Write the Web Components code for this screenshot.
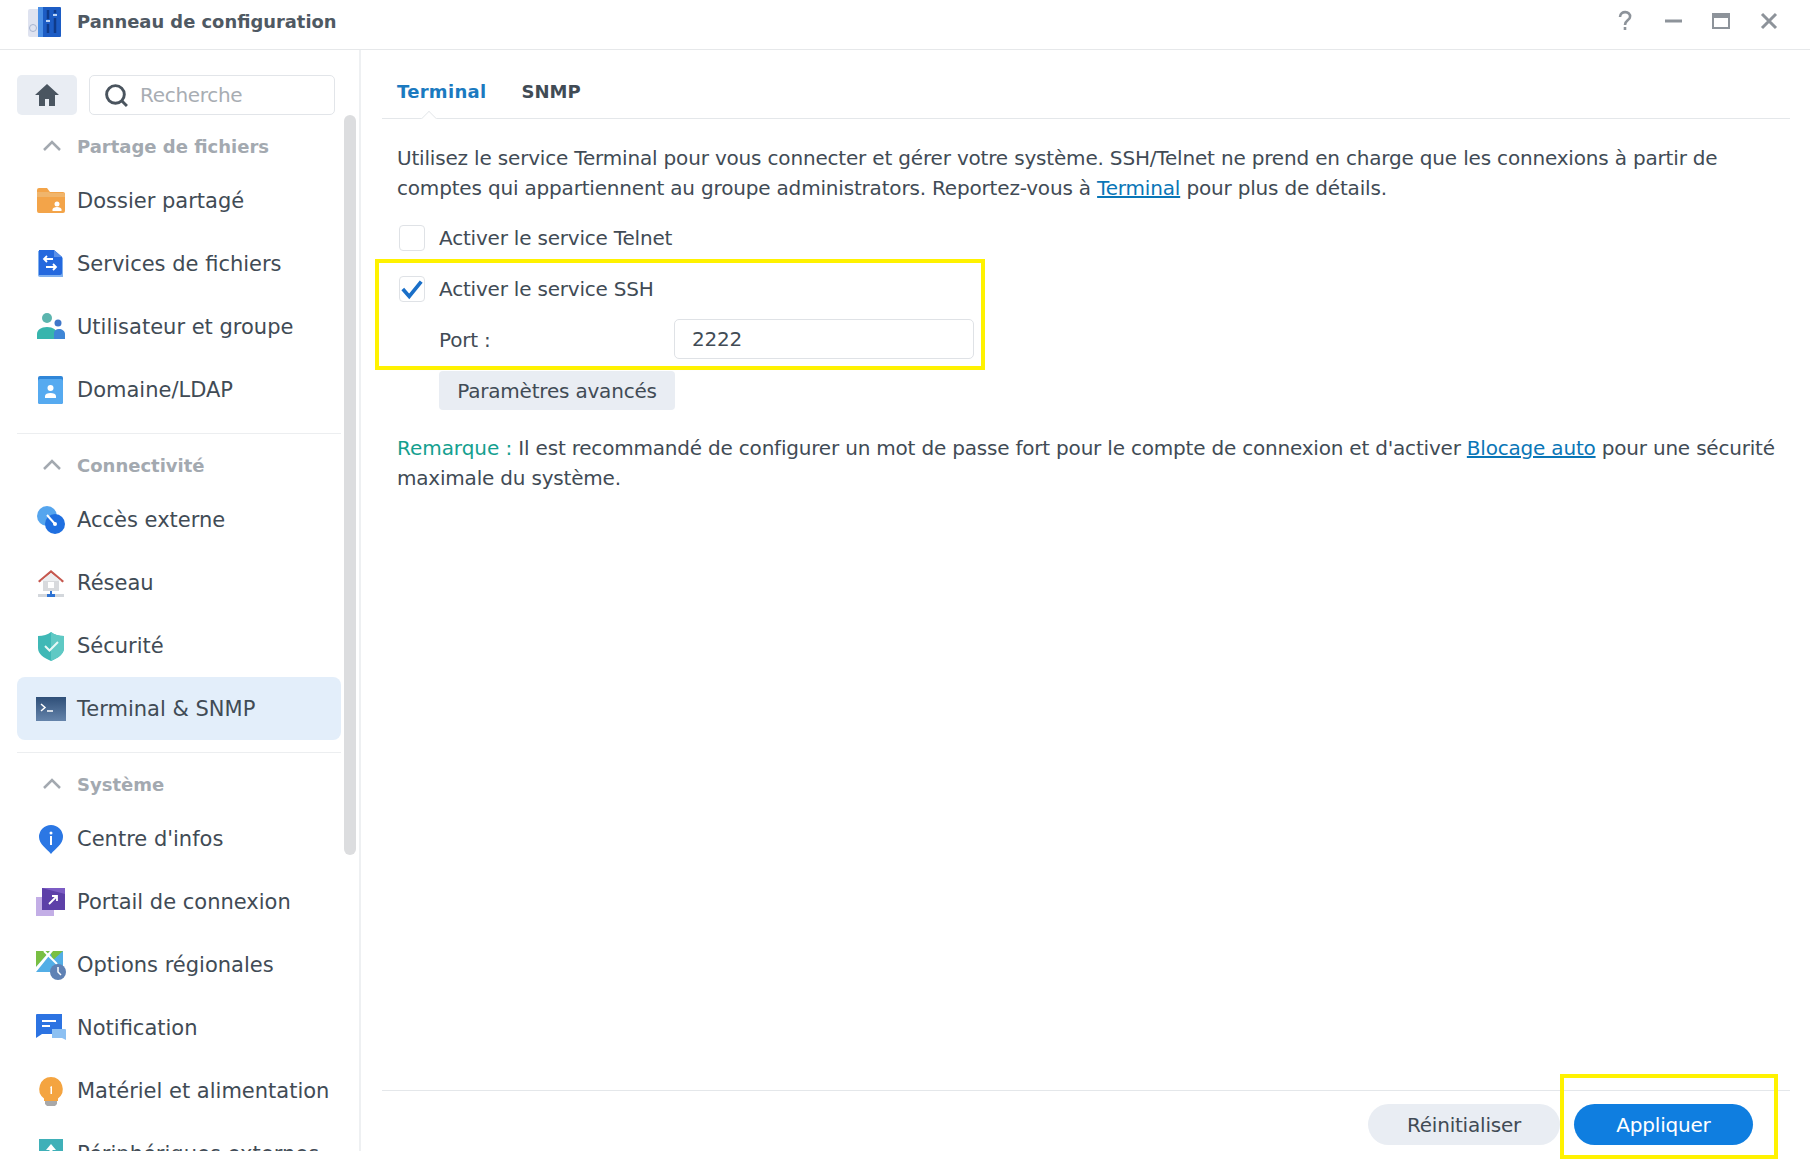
<!DOCTYPE html>
<html lang="fr">
<head>
<meta charset="utf-8">
<title>Panneau de configuration</title>
<style>
    html, body { margin: 0; height: 100%; background: #fff; overflow: hidden; }
    body { font-family: "DejaVu Sans", "Liberation Sans", sans-serif; color: #414b55; }
</style>
</head>
<body>
<dsm-window></dsm-window>
<script>
const ICONS = {
    folder: `<path d="M1 4a2 2 0 0 1 2-2h8l3 4h13a2 2 0 0 1 2 2v17a2 2 0 0 1-2 2H3a2 2 0 0 1-2-2z" fill="#f3a449"/><path d="M1 6h12l1 1h14l1 2v2H1z" fill="#f0b56c"/><circle cx="21" cy="18" r="2.5" fill="#fff"/><path d="M16.500 25v-1.500c0-1.500 2-2.500 4.500-2.500s4.500 1 4.500 2.500V25z" fill="#fff"/>`,
    files: `<path d="M2 2h17l8 7v19H4a2 2 0 0 1-2-2z" fill="#7fb0ef"/><path d="M3 1h15l8 7v16a2 2 0 0 1-2 2H3z" fill="#2468de"/><path d="M18 1l8 7h-8z" fill="#5b90e8"/><path d="M17 10h-9m3-3l-3 3 3 3M10 18h10m-3-3l3 3-3 3" fill="none" stroke="#fff" stroke-width="1.800"/>`,
    users: `<circle cx="11" cy="6" r="5" fill="#5cb5ae"/><circle cx="22" cy="11" r="3.500" fill="#3f76c9"/><path d="M1 27v-5c0-4 4-7 10-7s10 3 10 7v5z" fill="#37b5ad"/><path d="M18 27v-6c0-2 2-4 5-4s6 2 6 5v5z" fill="#3f86d6"/>`,
    domain: `<rect x="2" y="1" width="25" height="28" rx="2" fill="#2f86d8"/><rect x="2" y="4" width="25" height="25" rx="2" fill="#56aaf0"/><circle cx="14.500" cy="13" r="3" fill="#fff"/><path d="M9 23v-2c0-2 2.500-3 5.500-3s5.500 1 5.500 3v2z" fill="#fff"/>`,
    external: `<circle cx="11" cy="11" r="10" fill="#55a5ee"/><circle cx="19" cy="19" r="10" fill="#1f6fe0"/><path d="M11 10l8 9" stroke="#fff" stroke-width="2"/><circle cx="19" cy="19" r="2" fill="#fff"/>`,
    network: `<path d="M7 11h16v12H7z" fill="#d8dadd"/><path d="M15 2L2 13l1.500 1.500L15 5l11.500 9.500L28 13z" fill="#c6584f"/><path d="M15 5L5 13h20z" fill="#eceef0"/><rect x="12" y="14" width="6" height="6" fill="#fff"/><rect x="2" y="26" width="26" height="3" fill="#d3d7dc"/><path d="M14 23h2v3h3v3h-8v-3h3z" fill="#2f73d2"/>`,
    shield: `<path d="M15 1c3 2.500 8 4 13 4v12c0 6-6 10-13 13C8 27 2 23 2 17V5c5 0 10-1.500 13-4z" fill="#3fb8b6"/><path d="M15 1c3 2.500 8 4 13 4v12c0 6-6 10-13 13z" fill="#5fc9c4"/><path d="M9 15l4.500 4.500L22 11" fill="none" stroke="#e7f8f6" stroke-width="2"/>`,
    terminal: `<defs><linearGradient id="tg" x1="0" y1="0" x2="0" y2="1"><stop offset="0" stop-color="#2f4f78"/><stop offset="1" stop-color="#6584ab"/></linearGradient></defs><rect x="0" y="3" width="30" height="24" fill="url(#tg)"/><path d="M5 10l4 3.500L5 17" fill="none" stroke="#fff" stroke-width="1.500"/><path d="M11 17h6" stroke="#fff" stroke-width="1.500"/>`,
    info: `<path d="M15 30C11 25 3 20 3 13a12 12 0 0 1 24 0c0 7-8 12-12 17z" fill="#2b77e4"/><circle cx="15" cy="9" r="1.500" fill="#fff"/><rect x="14" y="12" width="2" height="9" fill="#fff"/>`,
    portal: `<rect x="0" y="10" width="18" height="19" fill="#c3aee6"/><rect x="6" y="1" width="23" height="22" fill="#5d40a8"/><path d="M6 1h23v6z" fill="#7c5cc4"/><path d="M13 17l8-8m-5 0h5v5" fill="none" stroke="#fff" stroke-width="1.800"/>`,
    region: `<path d="M0 1h27v21H0z" fill="#53aee6"/><path d="M0 1h14L0 17z" fill="#79bf43"/><path d="M14 1h13L17 10z" fill="#79bf43"/><path d="M0 17L14 1h3L0 22z" fill="#fff"/><path d="M8 1l13 13" stroke="#fff" stroke-width="2"/><circle cx="22" cy="22" r="8" fill="#5f81b4"/><path d="M22 17v5l3 3" fill="none" stroke="#fff" stroke-width="1.500"/>`,
    notif: `<path d="M0 2a1 1 0 0 1 1-1h25v20H6l-6 4z" fill="#2c73e2"/><path d="M6 8h14M6 13h8" stroke="#fff" stroke-width="1.800"/><path d="M16 16h13a1 1 0 0 1 1 1v10l-4-2H16z" fill="#8cc0f2"/>`,
    bulb: `<path d="M15 1a12 12 0 0 1 7 21.500V25H8v-2.500A12 12 0 0 1 15 1z" fill="#f4a440"/><path d="M9 25h12v3l-2 2h-8l-2-2z" fill="#a8a8a8"/><path d="M14 11l2-1v8h-1.500v-6z" fill="#fff"/>`,
    device: `<rect x="3" y="0" width="24" height="28" fill="#3fb0b8"/><path d="M15 5l5 6h-3.500v6h-3v-6H10z" fill="#fff"/>`
};

class WinControls extends HTMLElement {
    constructor() {
        super();
        this.attachShadow({ mode: 'open' });
        this.shadowRoot.innerHTML = `
            <style>
                :host { display: flex; align-items: center; }
                span { width: 48px; height: 24px; display: flex; justify-content: center; align-items: center; }
                svg { width: 22px; height: 22px; fill: none; stroke: #8d939a; }
            </style>
            <span><svg viewBox="0 0 22 22" stroke-width="2.600"><path d="M6 7c0-7 11-6 10 0 0 3-5 3.500-5 8"/><path d="M11 17v3"/></svg></span>
            <span><svg viewBox="0 0 22 22" stroke-width="3"><path d="M3 11h17"/></svg></span>
            <span><svg viewBox="0 0 22 22" stroke-width="2"><rect x="3" y="4" width="16" height="14"/><path d="M3 6h16" stroke-width="4"/></svg></span>
            <span><svg viewBox="0 0 22 22" stroke-width="3"><path d="M4 4l14 14M18 4L4 18"/></svg></span>
        `;
    }
}
customElements.define('win-controls', WinControls);

class TitleBar extends HTMLElement {
    constructor() {
        super();
        this.attachShadow({ mode: 'open' });
        this.shadowRoot.innerHTML = `
            <style>
                :host {
                    display: flex; align-items: center; height: 50px; box-sizing: border-box; flex: none;
                    border-bottom: 1px solid #e6e8ea; padding: 0 17px 7px 26px;
                }
                svg { width: 36px; height: 34px; margin-right: 15px; }
                .title { font-size: 17.900px; font-weight: 700; color: #4f5963; flex: 1; }
            </style>
            <svg viewBox="0 0 36 34">
                <rect x="2" y="5" width="14" height="28" rx="2" fill="#dfe3f0"/>
                <circle cx="7" cy="24" r="3.500" fill="none" stroke="#a7b5d0"/>
                <rect x="12" y="3" width="23" height="30" rx="1" fill="#1c5cc4"/>
                <rect x="12" y="3" width="5" height="30" fill="#4a8fe6"/>
                <path d="M22 6v9M22 20v9M29 6v3M29 14v15" stroke="#0f3b8a" stroke-width="2.500"/>
                <path d="M20 17h4M27 11h4" stroke="#bcd4f5" stroke-width="2"/>
            </svg>
            <span class="title"><slot></slot></span>
            <win-controls></win-controls>
        `;
    }
}
customElements.define('title-bar', TitleBar);

class SideItem extends HTMLElement {
    constructor() {
        super();
        this.attachShadow({ mode: 'open' });
    }
    connectedCallback() {
        const icon = ICONS[this.getAttribute('icon')] || '';
        this.shadowRoot.innerHTML = `
            <style>
                :host {
                    display: flex; align-items: center; height: 63px; box-sizing: border-box; flex: none;
                    width: 324px; padding-left: 19px; border-radius: 8px; font-size: 21px; color: #414b55;
                }
                :host([active]) { background: #e3eefa; }
                svg { width: 30px; height: 30px; margin-right: 11px; flex: none; }
                span { white-space: nowrap; }
            </style>
            <svg viewBox="0 0 30 30">${icon}</svg>
            <span><slot></slot></span>
        `;
    }
}
customElements.define('side-item', SideItem);

class SideSection extends HTMLElement {
    constructor() {
        super();
        this.attachShadow({ mode: 'open' });
    }
    connectedCallback() {
        this.shadowRoot.innerHTML = `
            <style>
                :host { display: block; width: 324px; padding-bottom: 12px; border-bottom: 1px solid #eceef0; }
                :host([last]) { border-bottom: none; padding-bottom: 0; }
                .head {
                    display: flex; align-items: center; height: 24px; margin: 19px 0 11px;
                    color: #a3a9b0; font-weight: 700; font-size: 18px;
                }
                svg { width: 20px; height: 12px; margin: 0 15px 0 25px; fill: none; stroke: #a3a9b0; stroke-width: 2.500; }
            </style>
            <div class="head">
                <svg viewBox="0 0 20 12"><path d="M2 10l8-8 8 8"/></svg>
                <span>${this.getAttribute('label')}</span>
            </div>
            <slot></slot>
        `;
    }
}
customElements.define('side-section', SideSection);

class SideSearch extends HTMLElement {
    constructor() {
        super();
        this.attachShadow({ mode: 'open' });
        this.shadowRoot.innerHTML = `
            <style>
                :host { display: flex; gap: 12px; flex: none; padding: 25px 0 0 17px; }
                .home {
                    width: 60px; height: 40px; border-radius: 5px; background: #e9edf3;
                    display: flex; align-items: center; justify-content: center;
                }
                .home svg { width: 26px; height: 24px; }
                .box {
                    width: 246px; height: 40px; box-sizing: border-box; border: 1px solid #e2e5e9; border-radius: 5px;
                    display: flex; align-items: center; padding-left: 14px; color: #a8adb3; font-size: 20px; letter-spacing: -.3px;
                }
                .box svg { width: 25px; height: 25px; margin-right: 11px; fill: none; stroke: #4a545e; stroke-width: 2.800; }
            </style>
            <div class="home"><svg viewBox="0 0 26 24"><path d="M13 1L1 12h4v11h6v-7h4v7h6V12h4z" fill="#4a5560"/></svg></div>
            <div class="box"><svg viewBox="0 0 24 24"><circle cx="11" cy="11" r="8.500"/><path d="M17 17l5 5"/></svg>Recherche</div>
        `;
    }
}
customElements.define('side-search', SideSearch);

class SideBar extends HTMLElement {
    constructor() {
        super();
        this.attachShadow({ mode: 'open' });
        this.shadowRoot.innerHTML = `
            <style>
                :host {
                    display: flex; flex-direction: column; width: 361px; box-sizing: border-box; flex: none;
                    border-right: 2px solid #eef0f2; position: relative; height: 1101px;
                }
                .list { flex: 1; overflow: hidden; padding-left: 17px; min-height: 0; }
                .thumb {
                    position: absolute; left: 344px; top: 65px; width: 12px; height: 740px;
                    background: #dcdddf; border-radius: 6px;
                }
            </style>
            <side-search></side-search>
            <div class="list"><slot></slot></div>
            <div class="thumb"></div>
        `;
    }
}
customElements.define('side-bar', SideBar);

class TabBar extends HTMLElement {
    constructor() {
        super();
        this.attachShadow({ mode: 'open' });
        this.shadowRoot.innerHTML = `
            <style>
                :host {
                    display: flex; gap: 35px; height: 69px; box-sizing: border-box; flex: none; position: relative;
                    padding: 28px 0 0 15px; border-bottom: 1px solid #e4e7ea; letter-spacing: 0;
                    font-size: 18px; font-weight: 700; color: #414b55; line-height: 28px;
                }
                .on { color: #1b7ac0; letter-spacing: .3px; }
                .notch {
                    position: absolute; left: 41px; bottom: -1px; width: 12px; height: 12px; box-sizing: border-box;
                    background: #fff; border-left: 1px solid #e4e7ea; border-top: 1px solid #e4e7ea;
                    transform: translateY(6px) rotate(45deg); clip-path: polygon(0 0, 100% 0, 0 100%);
                }
            </style>
            <span class="on">Terminal</span>
            <span>SNMP</span>
            <i class="notch"></i>
        `;
    }
}
customElements.define('tab-bar', TabBar);

class CheckRow extends HTMLElement {
    constructor() {
        super();
        this.attachShadow({ mode: 'open' });
    }
    connectedCallback() {
        const tick = this.hasAttribute('checked')
            ? `<svg viewBox="0 0 26 26"><path d="M3 13l7 8L23 5" fill="none" stroke="#1a6fc8" stroke-width="4"/></svg>` : '';
        this.shadowRoot.innerHTML = `
            <style>
                :host { display: flex; align-items: center; height: 26px; padding-left: 2px; font-size: 20px; }
                .box {
                    width: 26px; height: 26px; box-sizing: border-box; border: 1px solid #dfe2e6; border-radius: 4px;
                    margin-right: 14px; flex: none; background: #fff;
                }
                svg { width: 24px; height: 24px; display: block; }
            </style>
            <div class="box">${tick}</div>
            <span><slot></slot></span>
        `;
    }
}
customElements.define('check-row', CheckRow);

class PortField extends HTMLElement {
    constructor() {
        super();
        this.attachShadow({ mode: 'open' });
        this.shadowRoot.innerHTML = `
            <style>
                :host { display: flex; align-items: center; height: 40px; padding-left: 42px; font-size: 20px; }
                label { width: 235px; flex: none; padding-top: 2px; }
                .input {
                    width: 300px; height: 40px; box-sizing: border-box; border: 1px solid #dfe2e6; border-radius: 5px;
                    padding-left: 17px; line-height: 38px;
                }
            </style>
            <label>Port :</label>
            <div class="input">2222</div>
        `;
    }
}
customElements.define('port-field', PortField);

class DsmButton extends HTMLElement {
    constructor() {
        super();
        this.attachShadow({ mode: 'open' });
        this.shadowRoot.innerHTML = `
            <style>
                :host {
                    display: flex; align-items: center; justify-content: center; box-sizing: border-box;
                    height: 39px; border-radius: 4px; background: #e9edf3; font-size: 20px; color: #414b55;
                }
                :host([pill]) { height: 41px; border-radius: 21px; }
                :host([primary]) { background: #0f7ee0; color: #fff; }
            </style>
            <slot></slot>
        `;
    }
}
customElements.define('dsm-button', DsmButton);

class TerminalPane extends HTMLElement {
    constructor() {
        super();
        this.attachShadow({ mode: 'open' });
        this.shadowRoot.innerHTML = `
            <style>
                :host {
                    display: flex; flex-direction: column; flex: 1; min-width: 0; position: relative;
                    box-sizing: border-box; height: 1109px; padding: 0 20px 0 21px; letter-spacing: -.2px;
                }
                .body { flex: 1; padding: 24px 8px 0 15px; font-size: 20px; line-height: 30px; }
                p { margin: 0; }
                a { color: #0a76b7; text-decoration: underline; }
                .note { color: #14a08f; letter-spacing: -.05px; }
                .intro { letter-spacing: -.18px; padding-right: 7px; }
                check-row { margin-top: 22px; }
                .ssh { margin-top: 25px; }
                port-field { margin-top: 17px; }
                .adv { margin: 12px 0 0 42px; width: 236px; }
                .remark { margin-top: 23px; }
                .foot {
                    display: flex; justify-content: flex-end; gap: 14px; flex: none; height: 69px; box-sizing: border-box;
                    border-top: 1px solid #e4e7ea; padding: 13px 37px 0 0;
                }
                .reset { width: 192px; }
                .apply { width: 179px; }
                .mark { position: absolute; border: 4px solid #fff200; box-sizing: border-box; pointer-events: none; }
                .mark.a { left: 14px; top: 209px; width: 610px; height: 111px; }
                .mark.b { left: 1199px; top: 1024px; width: 218px; height: 85px; }
            </style>
            <tab-bar></tab-bar>
            <div class="body">
                <p class="intro">Utilisez le service Terminal pour vous connecter et gérer votre système. SSH/Telnet ne prend en charge que les connexions à partir de comptes qui appartiennent au groupe administrators. Reportez-vous à <a>Terminal</a> pour plus de détails.</p>
                <check-row>Activer le service Telnet</check-row>
                <check-row class="ssh" checked>Activer le service SSH</check-row>
                <port-field></port-field>
                <dsm-button class="adv">Paramètres avancés</dsm-button>
                <p class="remark"><span class="note">Remarque :</span> Il est recommandé de configurer un mot de passe fort pour le compte de connexion et d'activer <a>Blocage auto</a> pour une sécurité maximale du système.</p>
            </div>
            <div class="foot">
                <dsm-button class="reset" pill>Réinitialiser</dsm-button>
                <dsm-button class="apply" pill primary>Appliquer</dsm-button>
            </div>
            <div class="mark a"></div>
            <div class="mark b"></div>
        `;
    }
}
customElements.define('terminal-pane', TerminalPane);

class DsmWindow extends HTMLElement {
    constructor() {
        super();
        this.attachShadow({ mode: 'open' });
        this.shadowRoot.innerHTML = `
            <style>
                :host { display: flex; flex-direction: column; width: 1810px; height: 1159px; overflow: hidden; background: #fff; }
                .row { display: flex; flex: 1; min-height: 0; }
            </style>
            <title-bar>Panneau de configuration</title-bar>
            <div class="row">
                <side-bar>
                    <side-section label="Partage de fichiers">
                        <side-item icon="folder">Dossier partagé</side-item>
                        <side-item icon="files">Services de fichiers</side-item>
                        <side-item icon="users">Utilisateur et groupe</side-item>
                        <side-item icon="domain">Domaine/LDAP</side-item>
                    </side-section>
                    <side-section label="Connectivité">
                        <side-item icon="external">Accès externe</side-item>
                        <side-item icon="network">Réseau</side-item>
                        <side-item icon="shield">Sécurité</side-item>
                        <side-item icon="terminal" active>Terminal &amp; SNMP</side-item>
                    </side-section>
                    <side-section label="Système" last>
                        <side-item icon="info">Centre d'infos</side-item>
                        <side-item icon="portal">Portail de connexion</side-item>
                        <side-item icon="region">Options régionales</side-item>
                        <side-item icon="notif">Notification</side-item>
                        <side-item icon="bulb">Matériel et alimentation</side-item>
                        <side-item icon="device">Périphériques externes</side-item>
                    </side-section>
                </side-bar>
                <terminal-pane></terminal-pane>
            </div>
        `;
    }
}
customElements.define('dsm-window', DsmWindow);
</script>
</body>
</html>
